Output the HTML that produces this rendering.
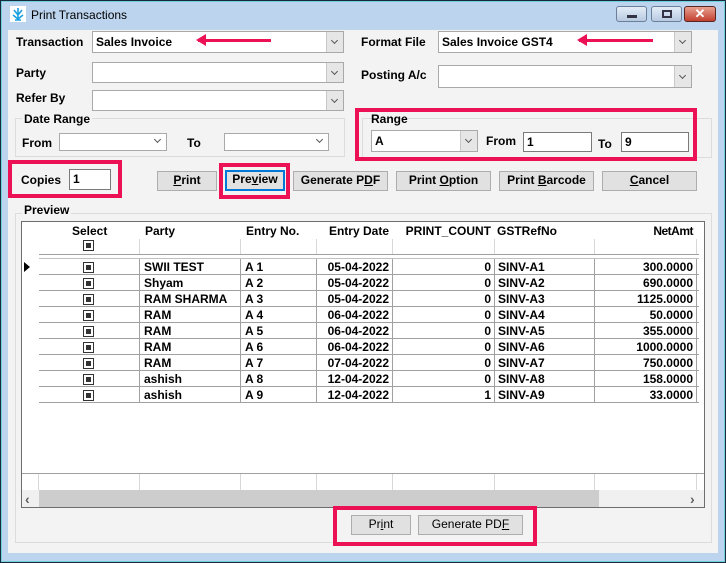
<!DOCTYPE html>
<html><head><meta charset="utf-8"><style>
*{box-sizing:border-box;margin:0;padding:0}
body{width:726px;height:563px;overflow:hidden;background:#bcd4ee;font-family:"Liberation Sans",Arial,sans-serif;font-size:12px;font-weight:bold;color:#000;position:relative}
.a{position:absolute}
.frame{left:0;top:0;width:726px;height:563px;border:1px solid #1a2a3a;box-shadow:inset 0 0 0 1px #6fd0e0}
.client{left:8px;top:30px;width:710px;height:523px;background:#f3f3f3}
.cb{position:absolute;background:#fff;border:1px solid #a9a9a9}
.cb .dd{position:absolute;right:0;top:0;bottom:0;width:17px;background:#e6e6e6;border-left:1px solid #c8c8c8}
.cb .dd:after{content:"";position:absolute;left:5px;top:50%;margin-top:-4px;width:4px;height:4px;border-right:1px solid #555;border-bottom:1px solid #555;transform:rotate(45deg)}
.cb .ch{position:absolute;right:6px;top:50%;margin-top:-5px;width:5px;height:5px;border-right:1px solid #555;border-bottom:1px solid #555;transform:rotate(45deg)}
.cb span{position:absolute;left:3px;top:50%;transform:translateY(-50%);font-size:12px}
.tb{position:absolute;background:#fff;border:1px solid #7a7a7a}
.tb span{position:absolute;left:3px;top:2px}
.btn{position:absolute;background:#e1e1e1;border:1px solid #adadad;text-align:center;line-height:17px;font-size:12px}
.red{position:absolute;border:4px solid #ec1155}
.grp{position:absolute;border:1px solid #dcdcdc}
.gl{position:absolute;background:#f3f3f3;padding:0 2px}
u{text-decoration:underline}
.arrow{position:absolute;height:3px;background:#ec1155}
.arrow:before{content:"";position:absolute;left:-2px;top:-5px;border-right:10px solid #ec1155;border-top:6px solid transparent;border-bottom:6px solid transparent}
.grid{left:21px;top:221px;width:684px;height:287px;background:#fff;border:1px solid #6d6d6d}
.vl{position:absolute;width:1px;background:#d8d8d8}
.hl{position:absolute;height:1px;background:#a0a0a0;left:17px;width:660px}
.chk{position:absolute;width:11px;height:11px;border:1px solid #333;background:#fff}
.chk:after{content:"";position:absolute;left:2px;top:2px;width:5px;height:5px;background:#333}
.c{position:absolute;white-space:nowrap}
.r{text-align:right}
</style></head><body>
<div class="a frame"></div>
<!-- title -->
<div class="a" style="left:10px;top:6px;width:16px;height:16px;background:#fff"></div>
<svg class="a" style="left:10px;top:6px" width="16" height="16"><path d="M8 2v12M4 4l4 5 4-5M3 9l5 4 5-4M5 14h6" stroke="#1aa0e0" stroke-width="1.6" fill="none"/></svg>
<div class="a" style="left:31px;top:8px;font-weight:normal;font-size:12px">Print Transactions</div>
<div class="a" style="left:616px;top:6px;width:31px;height:16px;border:1px solid #6c7f98;border-radius:3px;background:linear-gradient(#e4edf8,#b7c9e0)"><div class="a" style="left:10px;top:8px;width:10px;height:3px;background:#334;"></div></div>
<div class="a" style="left:651px;top:6px;width:31px;height:16px;border:1px solid #6c7f98;border-radius:3px;background:linear-gradient(#e4edf8,#b7c9e0)"><div class="a" style="left:10px;top:3px;width:10px;height:8px;border:2px solid #334"></div></div>
<div class="a" style="left:684px;top:6px;width:32px;height:16px;border:1px solid #5a2420;border-radius:3px;background:linear-gradient(#e8a090,#c24030);color:#fff;text-align:center;font-size:13px;line-height:14px">✕</div>
<div class="a client"></div>

<div class="a" style="left:16px;top:35px">Transaction</div>
<div class="cb" style="left:92px;top:31px;width:252px;height:22px"><span>Sales Invoice</span><div class="dd"></div></div>
<div class="arrow" style="left:198px;top:39px;width:73px"></div>
<div class="a" style="left:361px;top:35px">Format File</div>
<div class="cb" style="left:438px;top:31px;width:254px;height:22px"><span>Sales Invoice GST4</span><div class="dd"></div></div>
<div class="arrow" style="left:579px;top:39px;width:74px"></div>

<div class="a" style="left:16px;top:66px">Party</div>
<div class="cb" style="left:92px;top:62px;width:252px;height:21px"><div class="dd"></div></div>
<div class="a" style="left:361px;top:68px">Posting A/c</div>
<div class="cb" style="left:438px;top:65px;width:254px;height:23px"><div class="dd"></div></div>
<div class="a" style="left:16px;top:91px">Refer By</div>
<div class="cb" style="left:92px;top:90px;width:252px;height:21px"><div class="dd"></div></div>

<div class="grp" style="left:15px;top:118px;width:330px;height:39px"></div>
<div class="gl" style="left:22px;top:112px">Date Range</div>
<div class="a" style="left:22px;top:136px">From</div>
<div class="cb" style="left:59px;top:133px;width:108px;height:18px"><div class="ch"></div></div>
<div class="a" style="left:187px;top:136px">To</div>
<div class="cb" style="left:224px;top:133px;width:105px;height:18px"><div class="ch"></div></div>

<div class="grp" style="left:362px;top:118px;width:350px;height:40px"></div>
<div class="red" style="left:355px;top:108px;width:342px;height:53px"></div>
<div class="gl" style="left:369px;top:112px;background:transparent">Range</div>
<div class="cb" style="left:371px;top:130px;width:107px;height:22px"><span>A</span><div class="dd"></div></div>
<div class="a" style="left:486px;top:134px">From</div>
<div class="tb" style="left:523px;top:132px;width:69px;height:20px"><span>1</span></div>
<div class="a" style="left:598px;top:137px">To</div>
<div class="tb" style="left:621px;top:132px;width:68px;height:20px"><span>9</span></div>

<div class="red" style="left:8px;top:160px;width:114px;height:38px"></div>
<div class="a" style="left:21px;top:173px">Copies</div>
<div class="tb" style="left:69px;top:169px;width:42px;height:21px"><span>1</span></div>

<div class="btn" style="left:157px;top:171px;width:60px;height:20px"><u>P</u>rint</div>
<div class="red" style="left:219px;top:163px;width:71px;height:36px"></div>
<div class="btn" style="left:225px;top:170px;width:60px;height:21px;border:2px solid #0078d7;line-height:15px">Pre<u>v</u>iew</div>
<div class="btn" style="left:293px;top:171px;width:95px;height:20px">Generate P<u>D</u>F</div>
<div class="btn" style="left:396px;top:171px;width:95px;height:20px">Print <u>O</u>ption</div>
<div class="btn" style="left:499px;top:171px;width:95px;height:20px">Print <u>B</u>arcode</div>
<div class="btn" style="left:602px;top:171px;width:95px;height:20px"><u>C</u>ancel</div>

<div class="grp" style="left:15px;top:213px;width:697px;height:330px"></div>
<div class="gl" style="left:22px;top:203px">Preview</div>

<div class="a grid">
 <div class="vl" style="left:16px;top:0;height:233px;background:#fff"></div>
 <div class="vl" style="left:117px;top:17px;height:16px"></div><div class="vl" style="left:117px;top:37px;height:144px;background:#a0a0a0"></div>
 <div class="vl" style="left:218px;top:17px;height:16px"></div><div class="vl" style="left:218px;top:37px;height:144px;background:#a0a0a0"></div>
 <div class="vl" style="left:294px;top:17px;height:16px"></div><div class="vl" style="left:294px;top:37px;height:144px;background:#a0a0a0"></div>
 <div class="vl" style="left:370px;top:17px;height:16px"></div><div class="vl" style="left:370px;top:37px;height:144px;background:#a0a0a0"></div>
 <div class="vl" style="left:472px;top:17px;height:16px"></div><div class="vl" style="left:472px;top:37px;height:144px;background:#a0a0a0"></div>
 <div class="vl" style="left:572px;top:17px;height:16px"></div><div class="vl" style="left:572px;top:37px;height:144px;background:#a0a0a0"></div>
 <div class="vl" style="left:674px;top:17px;height:16px"></div><div class="vl" style="left:674px;top:37px;height:144px;background:#a0a0a0"></div>
 <div class="hl" style="top:32px"></div><div class="hl" style="top:36px;background:#c0c0c0"></div>
 <div class="hl" style="top:52px"></div><div class="hl" style="top:68px"></div><div class="hl" style="top:84px"></div><div class="hl" style="top:100px"></div><div class="hl" style="top:116px"></div><div class="hl" style="top:132px"></div><div class="hl" style="top:148px"></div><div class="hl" style="top:164px"></div><div class="hl" style="top:180px"></div>
 <div class="c" style="left:50px;top:2px">Select</div><div class="chk" style="left:61px;top:18px"></div>
 <div class="c" style="left:123px;top:2px">Party</div>
 <div class="c" style="left:224px;top:2px">Entry No.</div>
 <div class="c r" style="left:294px;width:73px;top:2px">Entry Date</div>
 <div class="c r" style="left:370px;width:99px;top:2px">PRINT_COUNT</div>
 <div class="c" style="left:475px;top:2px">GSTRefNo</div>
 <div class="c r" style="left:572px;width:99px;top:2px;letter-spacing:-0.5px">NetAmt</div>
 <div class="a" style="left:2px;top:40px;border-left:6px solid #000;border-top:5px solid transparent;border-bottom:5px solid transparent"></div>
 <div class="a" style="left:0;top:251px;width:682px;height:1px;background:#a0a0a0"></div>
 <div class="vl" style="left:16px;top:252px;height:16px"></div><div class="vl" style="left:117px;top:252px;height:16px"></div><div class="vl" style="left:218px;top:252px;height:16px"></div><div class="vl" style="left:294px;top:252px;height:16px"></div><div class="vl" style="left:370px;top:252px;height:16px"></div><div class="vl" style="left:472px;top:252px;height:16px"></div><div class="vl" style="left:572px;top:252px;height:16px"></div><div class="vl" style="left:674px;top:252px;height:16px"></div>
 <div class="a" style="left:0;top:268px;width:682px;height:17px;background:#f0f0f0"></div>
 <div class="a" style="left:17px;top:268px;width:560px;height:17px;background:#cdcdcd"></div>
 <div class="c" style="left:3px;top:269px;color:#606060;font-size:14px">‹</div>
 <div class="c" style="left:668px;top:269px;color:#606060;font-size:14px">›</div>
 <div id="rows"></div>
</div>

<div class="red" style="left:333px;top:506px;width:204px;height:40px"></div>
<div class="btn" style="left:351px;top:515px;width:60px;height:20px;font-weight:normal">Pr<u>i</u>nt</div>
<div class="btn" style="left:418px;top:515px;width:105px;height:20px;font-weight:normal">Generate PD<u>F</u></div>

<script>
var d=[["SWII TEST","A 1","05-04-2022","0","SINV-A1","300.0000"],["Shyam","A 2","05-04-2022","0","SINV-A2","690.0000"],["RAM SHARMA","A 3","05-04-2022","0","SINV-A3","1125.0000"],["RAM","A 4","06-04-2022","0","SINV-A4","50.0000"],["RAM","A 5","06-04-2022","0","SINV-A5","355.0000"],["RAM","A 6","06-04-2022","0","SINV-A6","1000.0000"],["RAM","A 7","07-04-2022","0","SINV-A7","750.0000"],["ashish","A 8","12-04-2022","0","SINV-A8","158.0000"],["ashish","A 9","12-04-2022","1","SINV-A9","33.0000"]];
var h="";d.forEach(function(r,i){var t=38+i*16;
h+='<div class="chk" style="left:61px;top:'+(t+2)+'px"></div>'+
'<div class="c" style="left:122px;top:'+t+'px">'+r[0]+'</div>'+
'<div class="c" style="left:223px;top:'+t+'px">'+r[1]+'</div>'+
'<div class="c r" style="left:294px;width:73px;top:'+t+'px">'+r[2]+'</div>'+
'<div class="c r" style="left:370px;width:99px;top:'+t+'px">'+r[3]+'</div>'+
'<div class="c" style="left:476px;top:'+t+'px">'+r[4]+'</div>'+
'<div class="c r" style="left:572px;width:99px;top:'+t+'px">'+r[5]+'</div>';});
document.getElementById("rows").outerHTML=h;
</script>
</body></html>
